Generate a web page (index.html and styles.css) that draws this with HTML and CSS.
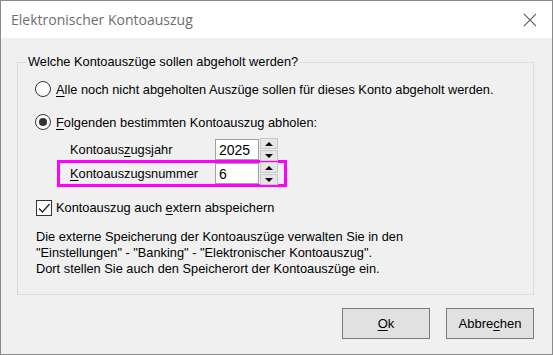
FILE: index.html
```html
<!DOCTYPE html>
<html lang="de">
<head>
    <meta charset="UTF-8">
    <title>Elektronischer Kontoauszug</title>
    <link rel="stylesheet" href="styles.css">
</head>
<body>
    <div class="window">
        <div class="titlebar">
            <span class="title">Elektronischer Kontoauszug</span>
            <svg class="close" width="14" height="14" viewBox="0 0 14 14">
                <path d="M1 1 L13 13 M13 1 L1 13" stroke="#6b6b6b" stroke-width="1.1" fill="none"/>
            </svg>
        </div>

        <div class="dialog">
            <div class="group">
                <div class="group-title">Welche Kontoauszüge sollen abgeholt werden?</div>

                <label class="option first">
                    <span class="radio"></span>
                    <span><u>A</u>lle noch nicht abgeholten Auszüge sollen für dieses Konto abgeholt werden.</span>
                </label>
                <label class="option second">
                    <span class="radio checked"></span>
                    <span><u>F</u>olgenden bestimmten Kontoauszug abholen:</span>
                </label>

                <div class="spin-row year">
                    <span class="spin-label">Kontoaus<u>z</u>ugsjahr</span>
                    <span class="spin-input">2025</span>
                    <span class="spin-buttons">
                        <span class="spin-btn up"></span>
                        <span class="spin-btn down"></span>
                    </span>
                </div>
                <div class="spin-row number highlight">
                    <span class="spin-label"><u>K</u>ontoauszugsnummer</span>
                    <span class="spin-input">6</span>
                    <span class="spin-buttons">
                        <span class="spin-btn up"></span>
                        <span class="spin-btn down"></span>
                    </span>
                </div>

                <label class="check-row">
                    <span class="checkbox">
                        <svg width="14" height="14" viewBox="0 0 14 14">
                            <path d="M2 7.5 L5.5 11 L12.5 3" stroke="#222" stroke-width="1.2" fill="none"/>
                        </svg>
                    </span>
                    <span>Kontoauszug auch <u>e</u>xtern abspeichern</span>
                </label>

                <p class="hint">
                    Die externe Speicherung der Kontoauszüge verwalten Sie in den<br>
                    "Einstellungen" - "Banking" - "Elektronischer Kontoauszug".<br>
                    Dort stellen Sie auch den Speicherort der Kontoauszüge ein.
                </p>
            </div>

            <div class="buttons">
                <button class="btn"><u>O</u>k</button>
                <button class="btn">Abbre<u>c</u>hen</button>
            </div>
        </div>
    </div>
</body>
</html>
```

FILE: styles.css
```css
body {
    margin: 0;
    padding: 0;
    background-color: #1c3a5e;
    font-family: "Liberation Sans", Arial, sans-serif;
    font-size: 12.8px;
    color: #000;
}
u {
    text-decoration-thickness: 1px;
    text-underline-offset: 2px;
}
.window {
    width: 553px;
    height: 355px;
    box-sizing: border-box;
    border: 1px solid #8a8a8a;
    background-color: #f0f0f0;
    display: flex;
    flex-direction: column;
}
.titlebar {
    height: 37px;
    background-color: #fff;
    display: flex;
    align-items: center;
    justify-content: space-between;
    padding: 0 15px 0 10px;
}
.title {
    font-family: "Open Sans", sans-serif;
    font-size: 14px;
    color: #6e6e6e;
}
.close {
    margin-top: 1px;
}
.dialog {
    padding: 24px 0 0 16px;
}
.group {
    width: 517px;
    box-sizing: border-box;
    border: 1px solid #dcdcdc;
    padding-bottom: 17px;
}
.group-title {
    width: fit-content;
    margin: -9px 0 0 8px;
    padding: 0 2px;
    line-height: 16px;
    background-color: #f0f0f0;
}
.option {
    display: flex;
    align-items: center;
    gap: 5px;
    height: 16px;
    padding-left: 17px;
}
.option.first {
    margin-top: 11px;
}
.option.second {
    margin-top: 17px;
}
.radio {
    width: 14px;
    height: 14px;
    border: 1px solid #333;
    border-radius: 50%;
    background-color: #fff;
    display: flex;
    align-items: center;
    justify-content: center;
}
.radio.checked::after {
    content: "";
    width: 8px;
    height: 8px;
    border-radius: 50%;
    background-color: #333;
}
.spin-row {
    display: flex;
    align-items: center;
    height: 23px;
    margin-left: 52px;
}
.spin-row.year {
    margin-top: 8px;
}
.spin-row.number {
    margin-top: -1px;
}
.highlight {
    width: 230px;
    height: 27px;
    box-sizing: border-box;
    margin-left: 39px;
    padding-left: 10px;
    border: 3px solid #ff00ff;
}
.spin-label {
    width: 145px;
}
.spin-input {
    width: 44px;
    height: 21px;
    box-sizing: border-box;
    border: 1px solid #a0a0a0;
    background-color: #fff;
    padding-left: 3px;
    font-size: 14px;
    line-height: 20px;
}
.spin-buttons {
    display: flex;
    flex-direction: column;
    gap: 1px;
    margin-left: 1px;
}
.spin-btn {
    width: 18px;
    height: 11px;
    box-sizing: border-box;
    border: 1px solid #c8c8c8;
    background-color: #e6e6e6;
    display: flex;
    align-items: center;
    justify-content: center;
}
.spin-btn::after {
    content: "";
    border-left: 4px solid transparent;
    border-right: 4px solid transparent;
}
.spin-btn.up::after {
    border-bottom: 4px solid #000;
}
.spin-btn.down::after {
    border-top: 4px solid #000;
}
.check-row {
    display: flex;
    align-items: center;
    gap: 4px;
    height: 17px;
    margin-top: 12px;
    padding-left: 18px;
}
.checkbox {
    width: 16px;
    height: 16px;
    box-sizing: border-box;
    border: 1px solid #333;
    background-color: #fff;
    display: flex;
    align-items: center;
    justify-content: center;
}
.hint {
    margin: 13px 0 0 18px;
    line-height: 16px;
}
.buttons {
    display: flex;
    justify-content: flex-end;
    gap: 16px;
    width: 517px;
    margin-top: 13px;
}
.btn {
    width: 88px;
    height: 31px;
    border: 1px solid #7a7a7a;
    background-color: #e1e1e1;
    font-family: "Liberation Sans", Arial, sans-serif;
    font-size: 13px;
    color: #000;
    padding: 0;
}
```
